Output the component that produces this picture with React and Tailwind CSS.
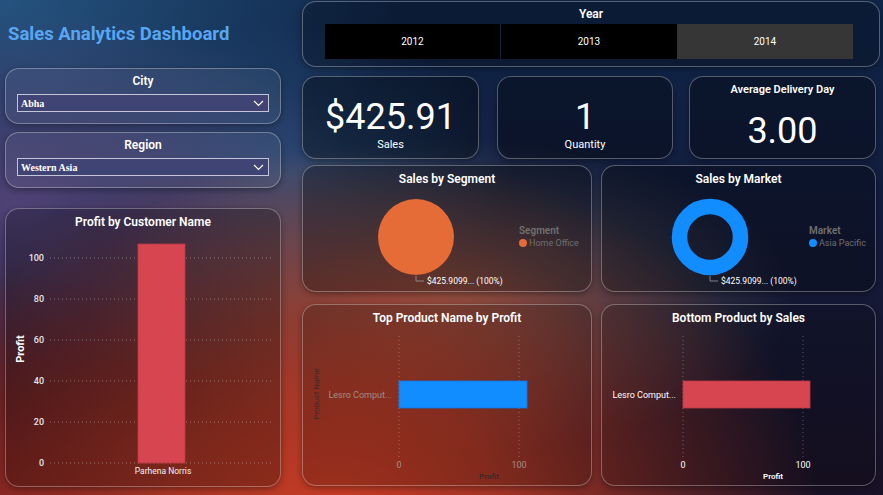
import React from 'react';

const FONT = 'font-[Roboto,"Liberation_Sans",sans-serif]';
const CARD = 'rounded-[14px] border border-white/30 shadow-[0_2px_6px_rgba(0,0,0,0.35)]';

const SLICERS = [
  { label: 'City', value: 'Abha' },
  { label: 'Region', value: 'Western Asia' },
];

const YEARS = ['2012', '2013', '2014'];

function Chevron() {
  return (
    <svg width="11" height="7" viewBox="0 0 11 7" className="shrink-0">
      <path d="M1 1l4.5 4.5L10 1" fill="none" stroke="#ffffff" strokeWidth="1.2" />
    </svg>
  );
}

function Slicer({ label, value }) {
  return (
    <div className={`${CARD} bg-white/5 h-[56px] flex flex-col`}>
      <div className="pt-[4px] leading-[16px] text-[12px] font-semibold text-center">{label}</div>
      <div className="mt-[5px] mx-[11px] h-[18px] bg-[#3f4474] border border-[#c4c6d8] flex items-center justify-between pl-[3px] pr-[4px]">
        <span className="font-['Liberation_Serif',serif] text-[10px] font-bold">{value}</span>
        <Chevron />
      </div>
    </div>
  );
}

function ProfitByCustomer() {
  const ticks = [
    { v: 100, y: 23 },
    { v: 80, y: 64 },
    { v: 60, y: 105 },
    { v: 40, y: 146 },
    { v: 20, y: 187 },
    { v: 0, y: 228 },
  ];
  return (
    <div className={`${CARD} bg-black/25 h-[279px] flex flex-col`}>
      <div className="h-[26px] pt-[5px] leading-[16px] text-[12px] font-semibold text-center">Profit by Customer Name</div>
      <svg width="276" height="253" className="block">
        {ticks.map((t) => (
          <g key={t.v}>
            <line x1="44" x2="267" y1={t.y} y2={t.y} stroke="rgba(255,255,255,0.35)" strokeDasharray="1 3" />
            <text x="38" y={t.y} dy="3" textAnchor="end" fontSize="9" fill="#e6e6e6" fontWeight="500">{t.v}</text>
          </g>
        ))}
        <rect x="132" y="9" width="47" height="219" fill="#d64550" stroke="#b93a45" strokeWidth="0.8" />
        <text x="157" y="239" textAnchor="middle" fontSize="8.5" fill="#f2f2f2">Parhena Norris</text>
        <text x="14" y="114" textAnchor="middle" fontSize="11" fontWeight="700" fill="#ffffff" transform="rotate(-90 14 114)" dy="4">Profit</text>
      </svg>
    </div>
  );
}

function YearSlicer() {
  return (
    <div className={`${CARD} bg-black/25 h-[66px] flex flex-col`}>
      <div className="pt-[4px] leading-[16px] text-[12px] font-semibold text-center">Year</div>
      <div className="mt-[2px] ml-[22px] w-[528px] h-[35px] grid grid-cols-3 text-[10px]">
        {YEARS.map((y, i) => (
          <div
            key={y}
            className={`flex items-center justify-center ${i === 2 ? 'bg-[#363636]' : 'bg-black'} ${i === 0 ? 'border-r border-[#13233f]' : ''}`}
          >
            {y}
          </div>
        ))}
      </div>
    </div>
  );
}

function Kpi({ value, label, className }) {
  return (
    <div className={`${CARD} bg-black/35 h-[83px] flex flex-col items-center pt-[20px] ${className}`}>
      <div className="text-[36px] leading-[40px]">{value}</div>
      <div className="mt-[1px] text-[11px] leading-[14px]">{label}</div>
    </div>
  );
}

function PieCard({ title, legend, item, color, donut, w, cx, lx }) {
  return (
    <div className={`${CARD} bg-black/30 h-[127px] flex flex-col`} style={{ width: w }}>
      <div className="pt-[5px] leading-[16px] text-[12px] font-semibold text-center">{title}</div>
      <svg width={w} height="106" className="block">
        {donut ? (
          <circle cx={cx} cy="50" r="30.5" fill="none" stroke={color} strokeWidth="15.5" />
        ) : (
          <circle cx={cx} cy="50" r="38" fill={color} />
        )}
        <path d={`M${cx} 89v5h8`} fill="none" stroke="#9a9a9a" strokeWidth="0.8" />
        <text x={cx + 11} y="94" dy="3" fontSize="8.5" fill="#ffffff">$425.9099... (100%)</text>
        <text x={lx} y="43" dy="3.5" fontSize="10" fontWeight="600" fill="#6f6f6f">{legend}</text>
        <circle cx={lx + 4} cy="56" r="4" fill={color} />
        <text x={lx + 10} y="56" dy="3.3" fontSize="9" fill="#6f6f6f">{item}</text>
      </svg>
    </div>
  );
}

function BarCard({ title, w, x0, x1, color, dim }) {
  const label = dim ? '#a08e86' : '#ffffff';
  const axis = dim ? '#3a2a27' : '#ffffff';
  return (
    <div className={`${CARD} bg-black/20 h-[182px] flex flex-col`} style={{ width: w }}>
      <div className="pt-[5px] leading-[16px] text-[12px] font-semibold text-center">{title}</div>
      <svg width={w} height="161" className="block">
        {[x0, x0 + 120].map((x) => (
          <line key={x} x1={x} x2={x} y1="10" y2="132" stroke="rgba(255,255,255,0.3)" strokeDasharray="1 3" />
        ))}
        <rect x={x0} y="55" width={x1 - x0} height="27" fill={color} stroke={dim ? '#0f78e0' : '#b93a45'} strokeWidth="0.8" />
        <text x={x0 - 7} y="69" dy="3" textAnchor="end" fontSize="9" fill={label}>Lesro Comput...</text>
        <text x={x0} y="139" dy="3" textAnchor="middle" fontSize="9" fill={label}>0</text>
        <text x={x0 + 120} y="139" dy="3" textAnchor="middle" fontSize="9" fill={label}>100</text>
        <text x={x0 + 90} y="150" dy="3" textAnchor="middle" fontSize="8" fontWeight="600" fill={axis}>Profit</text>
        {dim && (
          <text x="13" y="68" dy="3" textAnchor="middle" fontSize="8" fill={axis} transform="rotate(-90 13 68)">Product Name</text>
        )}
      </svg>
    </div>
  );
}

export default function App() {
  return (
    <div
      className={`${FONT} text-white w-[883px] h-[495px] overflow-hidden flex bg-[radial-gradient(ellipse_55%_75%_at_38%_105%,#cc3d24_0%,rgba(185,58,36,0.85)_35%,rgba(140,40,35,0)_100%),radial-gradient(ellipse_22%_25%_at_46%_72%,rgba(150,85,55,0.45)_0%,rgba(150,85,55,0)_100%),radial-gradient(ellipse_40%_32%_at_50%_60%,rgba(130,118,105,0.7)_0%,rgba(125,110,95,0)_100%),radial-gradient(ellipse_35%_45%_at_0%_100%,rgba(110,25,30,0.9)_0%,rgba(110,25,30,0)_100%),radial-gradient(ellipse_40%_40%_at_2%_42%,rgba(95,75,130,0.8)_0%,rgba(95,75,130,0)_100%),radial-gradient(ellipse_25%_30%_at_33%_35%,rgba(45,90,135,0.7)_0%,rgba(45,90,135,0)_100%),radial-gradient(ellipse_45%_45%_at_0%_0%,#25537f_0%,rgba(37,83,127,0)_100%),linear-gradient(180deg,#0f2649_0%,#131c3c_45%,#1a1226_100%)]`}
    >
      {/* left column: title, slicers, customer chart */}
      <div className="ml-[5px] w-[276px] flex flex-col">
        <div className="h-[68px] pt-[21px] pl-[3px] text-[18.5px] leading-[26px] font-bold text-[#58a6f2]">
          Sales Analytics Dashboard
        </div>
        <Slicer {...SLICERS[0]} />
        <div className="mt-[8px]">
          <Slicer {...SLICERS[1]} />
        </div>
        <div className="mt-[20px]">
          <ProfitByCustomer />
        </div>
      </div>

      {/* right column */}
      <div className="ml-[21px] w-[578px] pt-[1px] flex flex-col">
        <YearSlicer />

        <div className="mt-[9px] flex">
          <Kpi value="$425.91" label="Sales" className="w-[177px]" />
          <Kpi value="1" label="Quantity" className="w-[176px] ml-[18px]" />
          <div className={`${CARD} bg-black/35 h-[83px] w-[187px] ml-[16px] flex flex-col items-center`}>
            <div className="pt-[5px] leading-[16px] text-[11px] font-semibold">Average Delivery Day</div>
            <div className="mt-[13px] text-[36px] leading-[40px]">3.00</div>
          </div>
        </div>

        <div className="mt-[6px] flex gap-[9px]">
          <PieCard title="Sales by Segment" legend="Segment" item="Home Office" color="#e66c37" w={290} cx={113} lx={216} />
          <PieCard title="Sales by Market" legend="Market" item="Asia Pacific" color="#118dff" donut w={275} cx={108} lx={207} />
        </div>

        <div className="mt-[12px] flex gap-[9px]">
          <BarCard title="Top Product Name by Profit" w={290} x0={96} x1={224} color="#118dff" dim />
          <BarCard title="Bottom Product by Sales" w={275} x0={81} x1={208} color="#d64550" />
        </div>
      </div>
    </div>
  );
}
